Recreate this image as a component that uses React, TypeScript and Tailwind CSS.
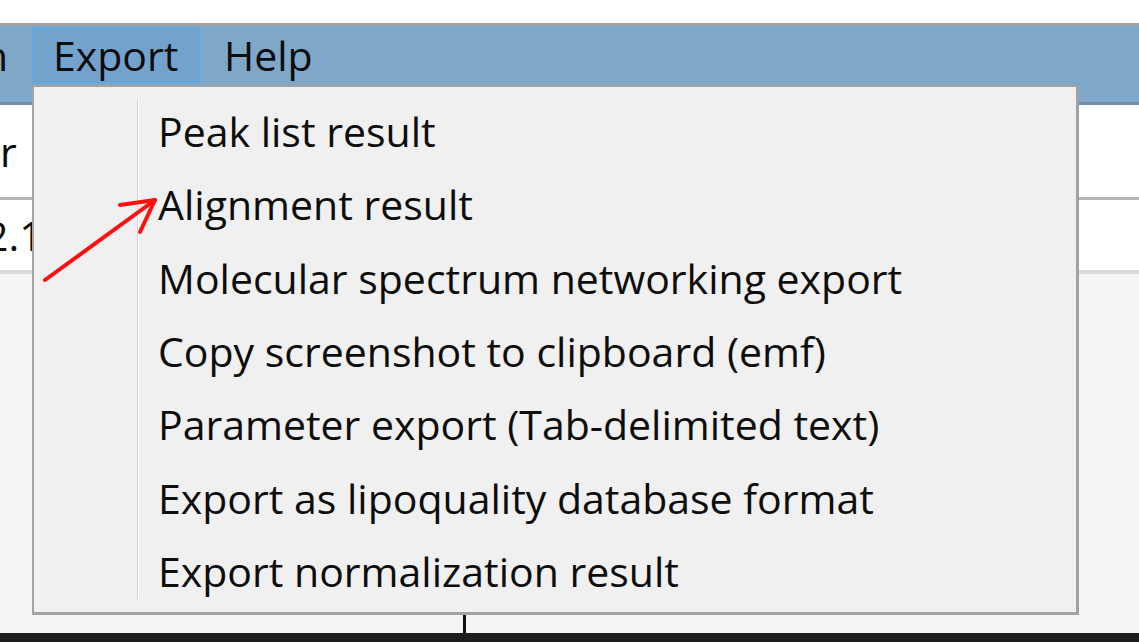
import React from "react";

const items = [
  "Peak list result",
  "Alignment result",
  "Molecular spectrum networking export",
  "Copy screenshot to clipboard (emf)",
  "Parameter export (Tab-delimited text)",
  "Export as lipoquality database format",
  "Export normalization result",
];

function ExportMenu() {
  return (
    <div className="absolute left-[32px] top-[85px] w-[1047px] h-[530px] bg-[#f0f0f0] border-l-2 border-t-2 border-r-[3px] border-b-[3px] border-[#a2a2a2] flex">
      <div className="w-[103px] shrink-0" />
      <div className="w-[2px] my-[13px] shrink-0 border-l border-[#d3d3d3] bg-white" />
      <div className="flex flex-col pt-[8px]">
        {items.map((label) => (
          <div key={label} className="h-[73.3px] flex items-center pl-[19px] whitespace-nowrap">
            {label}
          </div>
        ))}
      </div>
    </div>
  );
}

function Arrow() {
  return (
    <svg className="absolute left-0 top-0 pointer-events-none" width="1139" height="642" viewBox="0 0 1139 642">
      <g stroke="#ff1010" strokeWidth="4" strokeLinecap="round" fill="none">
        <line x1="45" y1="280" x2="155" y2="200" />
        <line x1="155" y1="200" x2="120" y2="205" />
        <line x1="155" y1="200" x2="140" y2="232" />
      </g>
    </svg>
  );
}

export default function App() {
  return (
    <div className="w-[1139px] h-[642px] relative overflow-hidden bg-white flex flex-col font-['Open_Sans',sans-serif] font-medium text-[41px] leading-none text-[#0d0d0d]">
      <div className="h-[23px] shrink-0 bg-white" />
      <div className="h-[3px] shrink-0 bg-[#a2a2a2]" />

      {/* menu bar */}
      <div className="h-[79px] shrink-0 bg-[#7fa7c8] border-b-[3px] border-[#6e8da8] flex items-start pt-[1px]">
        <div className="w-[32px] h-[56px] flex items-center overflow-hidden">
          <span className="ml-[-17px]">n</span>
        </div>
        <div className="w-[168px] h-[56px] flex items-center pl-[19px] border-2 border-[#5fa8de] bg-[#73a3cd]">
          Export
        </div>
        <div className="h-[56px] flex items-center pl-[24px]">Help</div>
      </div>

      {/* grid rows behind the menu */}
      <div className="h-[95px] shrink-0 bg-white border-b-[3px] border-[#b5b5b5] flex items-center">
        <span>r</span>
      </div>
      <div className="h-[74px] shrink-0 bg-white border-b-[4px] border-[#dadada] flex items-center overflow-hidden">
        <span className="ml-[-15px]">2.1</span>
      </div>
      <div className="flex-1 bg-[#f4f4f4] flex">
        <div className="w-[463px]" />
        <div className="w-[3px] bg-[#111] mt-auto h-[20px]" />
      </div>
      <div className="h-[9px] shrink-0 bg-[#1d1d1d]" />

      <ExportMenu />
      <Arrow />
    </div>
  );
}
